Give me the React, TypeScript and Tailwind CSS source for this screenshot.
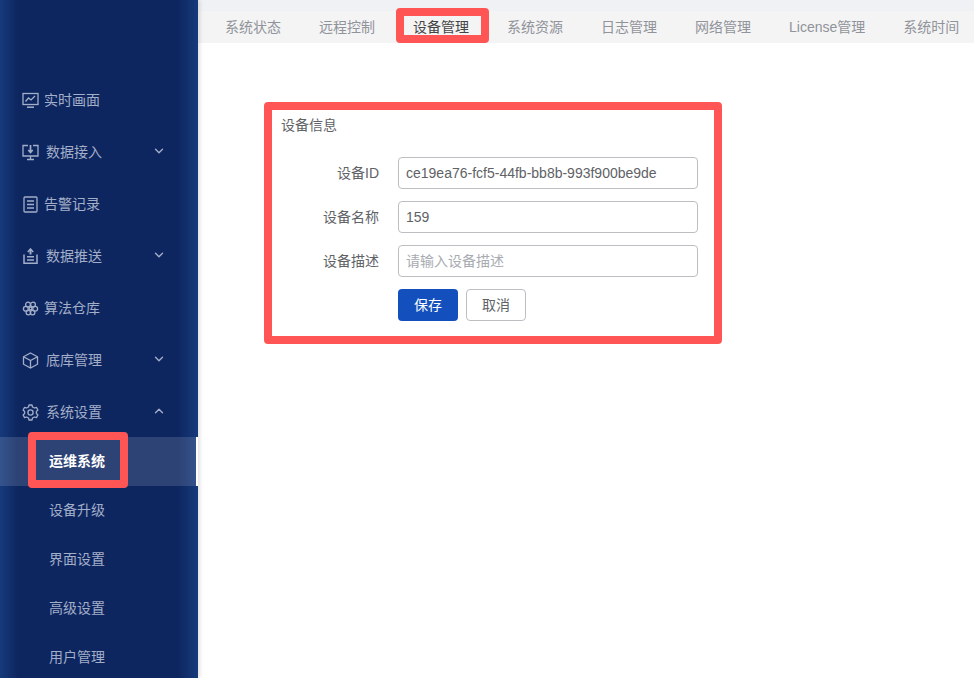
import { ChevronDown, ChevronUp } from "lucide-react";
import type { ReactNode } from "react";

const FONT = "font-['Liberation_Sans','Noto_Sans_CJK_SC',sans-serif]";

function Svg({ children }: { children: ReactNode }) {
  return (
    <svg width="17" height="17" viewBox="0 0 17 17" fill="none" stroke="currentColor" strokeWidth="1.3" className="shrink-0">
      {children}
    </svg>
  );
}

const icons: Record<string, ReactNode> = {
  screen: (
    <Svg>
      <rect x="1" y="1.5" width="15" height="11" />
      <path d="M3.5 9.5 L6.5 6 L9 8 L13 4" />
      <path d="M5 15.2 H12" strokeWidth="1.5" />
    </Svg>
  ),
  input: (
    <Svg>
      <path d="M6 1.5 H1 V12 H16 V1.5 H11" />
      <path d="M8.5 1 V8 M6.3 6 L8.5 8.5 L10.7 6" strokeWidth="1.7" />
      <path d="M8.5 12 V15.5 M5 15.5 H12" />
    </Svg>
  ),
  list: (
    <Svg>
      <rect x="2" y="1" width="13" height="15" rx="1" />
      <path d="M5 5 H12 M5 8.5 H12 M5 12 H12" />
    </Svg>
  ),
  upload: (
    <Svg>
      <path d="M8.5 1.5 V6.5" strokeWidth="2" />
      <path d="M5.8 4 L8.5 1 L11.2 4" strokeWidth="1.5" />
      <path d="M2 6.5 V15.3 H15 V6.5" strokeWidth="1.5" />
      <path d="M5 8.8 H12 M5 12 H12" strokeWidth="1.5" />
    </Svg>
  ),
  flower: (
    <Svg>
      <circle cx="6" cy="4.6" r="2.4" />
      <circle cx="11" cy="4.6" r="2.4" />
      <circle cx="3.8" cy="8.8" r="2.4" />
      <circle cx="13.2" cy="8.8" r="2.4" />
      <circle cx="6.4" cy="12.6" r="2.3" />
      <circle cx="10.6" cy="12.6" r="2.3" />
      <circle cx="8.5" cy="8.4" r="1.4" />
    </Svg>
  ),
  cube: (
    <Svg>
      <path d="M8.5 1 L15.5 4.8 V12.2 L8.5 16 L1.5 12.2 V4.8 Z" />
      <path d="M1.5 4.8 L8.5 8.6 L15.5 4.8 M8.5 8.6 V16" />
    </Svg>
  ),
  gear: (
    <Svg>
      <path
        d="M7 1 H10 L10.5 3 L12.4 4 L14.4 3.4 L15.9 6 L14.4 7.4 V9.6 L15.9 11 L14.4 13.6 L12.4 13 L10.5 14 L10 16 H7 L6.5 14 L4.6 13 L2.6 13.6 L1.1 11 L2.6 9.6 V7.4 L1.1 6 L2.6 3.4 L4.6 4 L6.5 3 Z"
        strokeLinejoin="round"
      />
      <circle cx="8.5" cy="8.5" r="2.6" />
    </Svg>
  ),
};

const menu = [
  { label: "实时画面", icon: "screen" },
  { label: "数据接入", icon: "input", arrow: "down" },
  { label: "告警记录", icon: "list" },
  { label: "数据推送", icon: "upload", arrow: "down" },
  { label: "算法仓库", icon: "flower" },
  { label: "底库管理", icon: "cube", arrow: "down" },
  { label: "系统设置", icon: "gear", arrow: "up" },
];

const subMenu = ["运维系统", "设备升级", "界面设置", "高级设置", "用户管理"];

const tabs = ["系统状态", "远程控制", "设备管理", "系统资源", "日志管理", "网络管理", "License管理", "系统时间"];

function Sidebar() {
  return (
    <aside className="relative z-10 w-[198px] h-full shrink-0 overflow-visible pt-[74px] text-[14px] text-[#a3aec8] shadow-[2px_0_4px_rgba(0,0,0,0.12)] bg-[linear-gradient(90deg,#163a7c_0px,#0e2660_18px,#0e2660_178px,#163a7c_198px)]">
      {menu.map((item) => (
        <div key={item.label} className="relative h-[52px] flex items-center pl-[22px]">
          {icons[item.icon]}
          <span className={item.arrow ? "ml-[7px]" : "ml-[5px]"}>{item.label}</span>
          {item.arrow === "down" && <ChevronDown size={14} strokeWidth={2.4} className="absolute left-[152px] top-[18px]" />}
          {item.arrow === "up" && <ChevronUp size={14} strokeWidth={2.4} className="absolute left-[152px] top-[18px]" />}
        </div>
      ))}
      <div className="mt-[-1px]">
        {subMenu.map((label, i) =>
          i === 0 ? (
            <div key={label} className="relative h-[49px] flex items-center pl-[49px] bg-white/[0.13] border-r-2 border-white text-white font-bold">
              {label}
              <div className="absolute left-[28px] top-[-5px] w-[100px] h-[56px] border-8 border-[#ff5555] rounded-[4px]" />
            </div>
          ) : (
            <div key={label} className="h-[49px] flex items-center pl-[49px] leading-[47px]">
              {label}
            </div>
          ),
        )}
      </div>
    </aside>
  );
}

function TabBar() {
  return (
    <div className="mt-[11px] h-[32px] bg-[#f4f4f5] flex items-center pl-[8px] text-[14px] text-[#909399]">
      {tabs.map((tab) => (
        <div key={tab} className={`relative h-full flex items-center px-[19px] whitespace-nowrap ${tab === "设备管理" ? "text-[#444]" : ""}`}>
          {tab}
          {tab === "设备管理" && <div className="absolute left-[2px] right-[-1px] top-[-3px] h-[35px] border-8 border-[#ff5555] rounded-[4px]" />}
        </div>
      ))}
    </div>
  );
}

function Field({ label, value, placeholder }: { label: string; value?: string; placeholder?: string }) {
  return (
    <div className="flex items-center h-[32px]">
      <label className="w-[107px] text-right text-[14px] text-[#606266]">{label}</label>
      <input
        readOnly
        value={value ?? ""}
        placeholder={placeholder}
        className="ml-[19px] w-[300px] h-[32px] px-[7px] border border-[#bcbec2] rounded-[4px] text-[14px] text-[#606266] placeholder:text-[#a8abb2] outline-none"
      />
    </div>
  );
}

export default function App() {
  return (
    <div className={`flex w-[974px] h-[678px] overflow-hidden bg-white ${FONT}`}>
      <Sidebar />
      <main className="flex-1 min-w-0 bg-white">
        <div className="bg-[#eff1f5] h-[43px] pt-px">
          <div className="-mt-px">
            <TabBar />
          </div>
        </div>
        <section className="ml-[66px] mt-[59px] w-[458px] h-[242px] border-8 border-[#ff5555] rounded-[4px] bg-white">
          <h3 className="pl-[9px] pt-[6px] text-[14px] leading-[18px] font-normal text-[#606266]">设备信息</h3>
          <div className="mt-[23px] flex flex-col gap-[12px]">
            <Field label="设备ID" value="ce19ea76-fcf5-44fb-bb8b-993f900be9de" />
            <Field label="设备名称" value="159" />
            <Field label="设备描述" placeholder="请输入设备描述" />
            <div className="ml-[126px] flex gap-[8px] text-[14px]">
              <button className="w-[60px] h-[32px] rounded-[4px] bg-[#134fbd] text-white">保存</button>
              <button className="w-[60px] h-[32px] rounded-[4px] border border-[#bcbec2] text-[#606266]">取消</button>
            </div>
          </div>
        </section>
      </main>
    </div>
  );
}
